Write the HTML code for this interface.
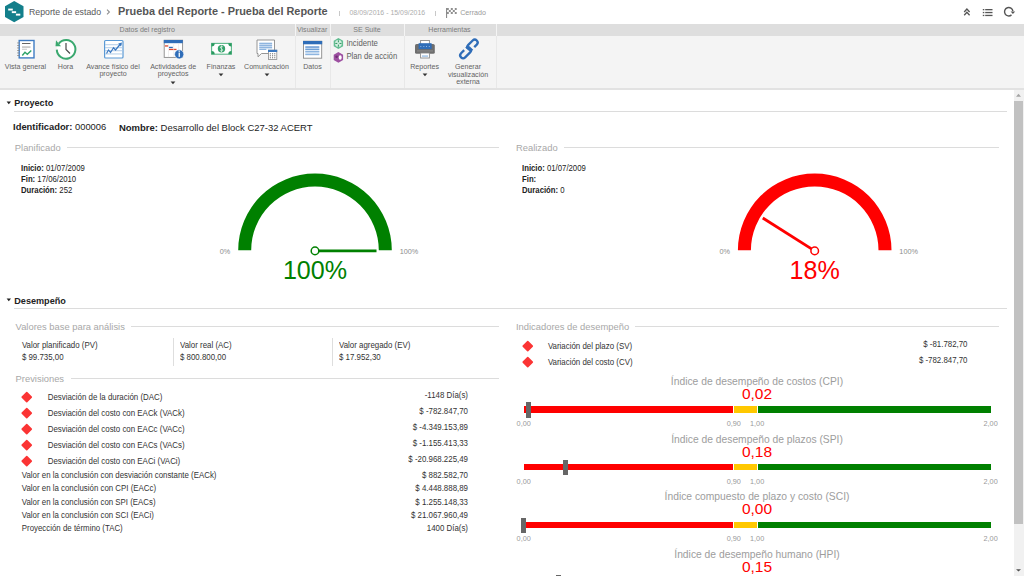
<!DOCTYPE html>
<html><head><meta charset="utf-8"><style>
html,body{margin:0;padding:0;background:#fff;width:1024px;height:576px;overflow:hidden;}
body{position:relative;font-family:"Liberation Sans",sans-serif;}
.t{position:absolute;line-height:1;white-space:nowrap;transform:scaleY(1.08);transform-origin:0 0.8465em;}
.r{position:absolute;}
.a{position:absolute;overflow:visible;}
</style></head><body>
<svg class="a" style="left:0;top:0" width="30" height="24" viewBox="0 0 30 24">
<polygon points="14.2,1 23.5,6.3 23.5,16.9 14.2,22.2 5,16.9 5,6.3" fill="#137F8B"/>
<rect x="8.2" y="8.6" width="4.6" height="1.9" fill="#fff"/>
<rect x="11.8" y="11.2" width="4.3" height="1.9" fill="#fff"/>
<rect x="15.9" y="13.7" width="4.4" height="1.9" fill="#fff"/>
</svg>
<div class="t" style="left:29.00px;top:7.99px;font-size:8.75px;color:#585858;transform:none;">Reporte de estado</div>
<svg class="a" style="left:104px;top:8px" width="8" height="10" viewBox="0 0 8 10"><polyline points="3,1.6 5.4,4 3,6.4" fill="none" stroke="#8f8f8f" stroke-width="1.1"/></svg>
<div class="t" style="left:118.00px;top:6.46px;font-size:10.91px;color:#555;font-weight:700;transform:none;">Prueba del Reporte - Prueba del Reporte</div>
<div class="r" style="left:338.5px;top:10.5px;width:1px;height:5px;background:#c8c8c8;"></div>
<div class="t" style="left:349.50px;top:9.73px;font-size:6.94px;color:#adadad;">08/09/2016 - 15/09/2016</div>
<div class="r" style="left:435px;top:10.5px;width:1px;height:5px;background:#c8c8c8;"></div>
<svg class="a" style="left:445px;top:6px" width="13" height="13" viewBox="0 0 13 13">
<rect x="1" y="2" width="1.1" height="10" fill="#8c8c8c"/>
<path d="M2 2h1.8v2h-1.8zM5.8 2h2v2h-2zM9.8 2h1.9v2h-1.9zM3.8 4h2v2h-2zM7.8 4h2v2h-2zM2 6h1.8v2h-1.8zM5.8 6h2v2h-2zM9.8 6h1.9v2h-1.9z" fill="#8f8f8f"/>
</svg>
<div class="t" style="left:460.20px;top:9.55px;font-size:7.15px;color:#9a9a9a;">Cerrado</div>
<svg class="a" style="left:962px;top:6px" width="56" height="13" viewBox="0 0 56 13">
<polyline points="2.2,6 4.9,3 7.6,6" fill="none" stroke="#555" stroke-width="1.3"/>
<polyline points="2.2,9.3 4.9,6.3 7.6,9.3" fill="none" stroke="#555" stroke-width="1.3"/>
<rect x="20.8" y="3" width="1.5" height="1.3" fill="#555"/><rect x="23.2" y="3" width="7.3" height="1.3" fill="#555"/>
<rect x="20.8" y="5.9" width="1.5" height="1.3" fill="#555"/><rect x="23.2" y="5.9" width="7.3" height="1.3" fill="#555"/>
<rect x="20.8" y="8.8" width="1.5" height="1.3" fill="#555"/><rect x="23.2" y="8.8" width="7.3" height="1.3" fill="#555"/>
<path d="M50.9,5.2 A4.2,4.2 0 1 0 49.5,8.9" fill="none" stroke="#555" stroke-width="1.4"/>
<polygon points="48.6,5.4 53.2,5.4 50.9,8.1" fill="#555"/>
</svg>
<div class="r" style="left:0px;top:24px;width:1024px;height:12px;background:#dedede;"></div>
<div class="r" style="left:0px;top:36px;width:1024px;height:52px;background:#f4f4f4;"></div>
<div class="r" style="left:0px;top:88px;width:1024px;height:2px;background:#e2e2e2;"></div>
<div class="r" style="left:294.5px;top:24px;width:1px;height:12px;background:#f4f4f4;"></div>
<div class="r" style="left:294.5px;top:36px;width:1px;height:52px;background:#e8e8e8;"></div>
<div class="r" style="left:330px;top:24px;width:1px;height:12px;background:#f4f4f4;"></div>
<div class="r" style="left:330px;top:36px;width:1px;height:52px;background:#e8e8e8;"></div>
<div class="r" style="left:403.5px;top:24px;width:1px;height:12px;background:#f4f4f4;"></div>
<div class="r" style="left:403.5px;top:36px;width:1px;height:52px;background:#e8e8e8;"></div>
<div class="r" style="left:495.5px;top:24px;width:1px;height:12px;background:#f4f4f4;"></div>
<div class="r" style="left:495.5px;top:36px;width:1px;height:52px;background:#e8e8e8;"></div>
<div class="t" style="left:-152.80px;width:600px;text-align:center;top:25.92px;font-size:7.06px;color:#7c7c7c;">Datos del registro</div>
<div class="t" style="left:12.20px;width:600px;text-align:center;top:25.92px;font-size:7.06px;color:#7c7c7c;">Visualizar</div>
<div class="t" style="left:67.00px;width:600px;text-align:center;top:25.92px;font-size:7.06px;color:#7c7c7c;">SE Suite</div>
<div class="t" style="left:149.50px;width:600px;text-align:center;top:25.92px;font-size:7.06px;color:#7c7c7c;">Herramientas</div>
<div class="t" style="left:-274.50px;width:600px;text-align:center;top:63.59px;font-size:7.1px;color:#636363;">Vista general</div>
<div class="t" style="left:-234.50px;width:600px;text-align:center;top:63.59px;font-size:7.1px;color:#636363;">Hora</div>
<div class="t" style="left:-187.00px;width:600px;text-align:center;top:63.59px;font-size:7.1px;color:#636363;">Avance físico del</div>
<div class="t" style="left:-187.00px;width:600px;text-align:center;top:71.39px;font-size:7.1px;color:#636363;">proyecto</div>
<div class="t" style="left:-126.80px;width:600px;text-align:center;top:63.59px;font-size:7.1px;color:#636363;">Actividades de</div>
<div class="t" style="left:-126.80px;width:600px;text-align:center;top:71.39px;font-size:7.1px;color:#636363;">proyectos</div>
<svg class="a" style="left:170.3px;top:80.7px" width="6" height="4" viewBox="0 0 6 4"><polygon points="0.6,0.5 5.4,0.5 3,3.2" fill="#333"/></svg>
<div class="t" style="left:-79.00px;width:600px;text-align:center;top:63.59px;font-size:7.1px;color:#636363;">Finanzas</div>
<svg class="a" style="left:218px;top:72.9px" width="6" height="4" viewBox="0 0 6 4"><polygon points="0.6,0.5 5.4,0.5 3,3.2" fill="#333"/></svg>
<div class="t" style="left:-33.50px;width:600px;text-align:center;top:63.59px;font-size:7.1px;color:#636363;">Comunicación</div>
<svg class="a" style="left:263.6px;top:72.9px" width="6" height="4" viewBox="0 0 6 4"><polygon points="0.6,0.5 5.4,0.5 3,3.2" fill="#333"/></svg>
<div class="t" style="left:12.50px;width:600px;text-align:center;top:63.59px;font-size:7.1px;color:#636363;">Datos</div>
<div class="t" style="left:346.40px;top:39.54px;font-size:7.75px;color:#606060;">Incidente</div>
<div class="t" style="left:346.40px;top:53.14px;font-size:7.75px;color:#606060;">Plan de acción</div>
<div class="t" style="left:124.60px;width:600px;text-align:center;top:63.59px;font-size:7.1px;color:#636363;">Reportes</div>
<svg class="a" style="left:421.6px;top:72.9px" width="6" height="4" viewBox="0 0 6 4"><polygon points="0.6,0.5 5.4,0.5 3,3.2" fill="#333"/></svg>
<div class="t" style="left:168.00px;width:600px;text-align:center;top:63.59px;font-size:7.1px;color:#636363;">Generar</div>
<div class="t" style="left:168.00px;width:600px;text-align:center;top:71.59px;font-size:7.1px;color:#636363;">visualización</div>
<div class="t" style="left:168.00px;width:600px;text-align:center;top:79.49px;font-size:7.1px;color:#636363;">externa</div>
<svg class="a" style="left:0;top:36px" width="500" height="26" viewBox="0 36 500 26">
<!-- vista general -->
<rect x="19.2" y="40.5" width="14.8" height="17.4" fill="#fff" stroke="#3f7cc4" stroke-width="1.4"/>
<g fill="#8a8a8a"><rect x="17.2" y="42.5" width="2.2" height="0.9"/><rect x="17.2" y="45" width="2.2" height="0.9"/><rect x="17.2" y="47.5" width="2.2" height="0.9"/><rect x="17.2" y="50" width="2.2" height="0.9"/><rect x="17.2" y="52.5" width="2.2" height="0.9"/><rect x="17.2" y="55" width="2.2" height="0.9"/></g>
<rect x="22" y="43" width="8.5" height="1" fill="#666"/>
<rect x="22" y="46.5" width="8.5" height="1.1" fill="#aaa"/>
<rect x="22" y="48.8" width="5" height="0.8" fill="#bbb"/>
<polyline points="22.3,55.5 25,52.3 27.3,54.3 31.3,50.5" fill="none" stroke="#2ea36a" stroke-width="1.4"/>
<!-- hora -->
<circle cx="66" cy="49.2" r="9.2" fill="#fff"/>
<path d="M56.8,49.6 A9.3,9.3 0 1 0 58.8,43.6" fill="none" stroke="#3aa86f" stroke-width="2"/>
<polygon points="56,40.2 61,46.2 55.5,46.2" fill="#3aa86f"/>
<polyline points="66,43 66,49.5 70,53.5" fill="none" stroke="#4a4a4a" stroke-width="1.2"/>
<!-- avance -->
<rect x="104.6" y="40.5" width="18.4" height="17.5" rx="1" fill="#fff" stroke="#5b9ad5" stroke-width="1.2"/>
<g fill="#a9c7e6"><rect x="105" y="44.3" width="17.6" height="0.9"/><rect x="105" y="47.3" width="17.6" height="0.9"/><rect x="105" y="50.3" width="17.6" height="0.9"/><rect x="105" y="53.5" width="17.6" height="0.9"/></g>
<polyline points="106.5,53.5 108.5,50 110.5,52.5 113.5,47.8 115.5,50 120,44.5" fill="none" stroke="#3a78c0" stroke-width="1.2"/>
<polygon points="118.2,43.5 122,42.6 121,46.4" fill="#3a78c0"/>
<!-- actividades -->
<rect x="164.2" y="40.2" width="18.4" height="17.2" fill="#fff" stroke="#8a8a8a" stroke-width="0.9"/>
<rect x="163.8" y="40" width="19" height="3.2" fill="#2f6db8"/>
<rect x="165" y="45.3" width="3.3" height="1.3" fill="#e0452a"/>
<rect x="169" y="46.8" width="3.8" height="1.3" fill="#2f6db8"/>
<rect x="169" y="48.8" width="7.5" height="1.3" fill="#e0452a"/>
<rect x="168.2" y="43.5" width="0.6" height="13.6" fill="#e4e4e4"/><rect x="173.5" y="43.5" width="0.6" height="13.6" fill="#e8e8e8"/><rect x="178" y="43.5" width="0.6" height="13.6" fill="#e8e8e8"/>
<circle cx="179.2" cy="54.3" r="4.6" fill="#2f6db8" stroke="#fff" stroke-width="0.6"/>
<rect x="178.6" y="52.6" width="1.3" height="4.3" fill="#fff"/><rect x="178.6" y="50.6" width="1.3" height="1.2" fill="#fff"/>
<!-- finanzas -->
<rect x="211.6" y="43.4" width="19.8" height="10.8" fill="#fff" stroke="#5cb88a" stroke-width="1.1"/>
<path d="M211.5 43.3h3.2a3.2 3.2 0 0 1 -3.2 3.2z M231.5 43.3v3.2a3.2 3.2 0 0 1 -3.2 -3.2z M211.5 54.3v-3.2a3.2 3.2 0 0 1 3.2 3.2z M231.5 54.3h-3.2a3.2 3.2 0 0 1 3.2 -3.2z" fill="#2a9a60"/>
<circle cx="221.5" cy="48.8" r="3.7" fill="#34a36b"/>
<path d="M222.9,46.9 Q221.5,46 220.4,46.9 Q219.9,48.2 221.5,48.7 Q223.2,49.3 222.6,50.6 Q221.5,51.5 220.1,50.6 M221.5,45.4 V52.2" fill="none" stroke="#e6f5ec" stroke-width="0.7"/>
<!-- comunicacion -->
<path d="M257,40 h17.5 v13.5 h-13 l-3.5,3.3 v-3.3 h-1 z" fill="#fff" stroke="#8a8a8a" stroke-width="0.9"/>
<rect x="259.3" y="42.6" width="12.8" height="6.6" fill="#d3e3f4"/><g fill="#8fb5df"><rect x="259.3" y="42.8" width="12.8" height="1.2"/><rect x="259.3" y="44.8" width="12.8" height="1.2"/><rect x="259.3" y="46.8" width="12.8" height="1.2"/><rect x="259.3" y="48.8" width="7" height="1.2"/></g>
<rect x="268.4" y="50.2" width="8.4" height="9.2" fill="#fff" stroke="#8a8a8a" stroke-width="0.8"/>
<rect x="268" y="49.8" width="9.2" height="2.2" fill="#3a78c0"/>
<g fill="#777"><rect x="269.8" y="53.2" width="1.1" height="1.1"/><rect x="272" y="53.2" width="1.1" height="1.1"/><rect x="274.2" y="53.2" width="1.1" height="1.1"/><rect x="269.8" y="55.2" width="1.1" height="1.1"/><rect x="272" y="55.2" width="1.1" height="1.1"/><rect x="274.2" y="55.2" width="1.1" height="1.1"/><rect x="269.8" y="57.2" width="1.1" height="1.1"/><rect x="272" y="57.2" width="1.1" height="1.1"/><rect x="274.2" y="57.2" width="1.1" height="1.1"/></g>
<!-- datos -->
<rect x="303.5" y="41.2" width="18.2" height="17" fill="#fff" stroke="#8a8a8a" stroke-width="0.9"/>
<rect x="303" y="41" width="19.2" height="3.3" fill="#2f6db8"/>
<rect x="305.3" y="46.3" width="14" height="9" fill="#dce8f5"/>
<g><rect x="305.3" y="46.4" width="14" height="1.3" fill="#5a8fd0"/><rect x="305.3" y="48.7" width="14" height="1.3" fill="#6d9fd6"/><rect x="305.3" y="51" width="14" height="1.3" fill="#8db5e0"/><rect x="305.3" y="53.8" width="14" height="1.3" fill="#8db5e0"/></g>
<!-- incidente -->
<polygon points="338.4,38 343.1,40.7 343.1,46.2 338.4,48.9 333.7,46.2 333.7,40.7" fill="#62bd91"/>
<circle cx="338.4" cy="43.45" r="3.4" fill="#d2ede0"/>
<path d="M338.4 40.3v2M338.4 44.6v2M335.3 43.45h2M339.5 43.45h2" stroke="#1f8f52" stroke-width="0.9"/>
<!-- plan -->
<polygon points="338.4,52 343.1,54.7 343.1,60.1 338.4,62.8 333.7,60.1 333.7,54.7" fill="#9d50a1"/>
<ellipse cx="340.2" cy="57.5" rx="1.5" ry="2.2" fill="#fff"/>
<circle cx="336.6" cy="56.8" r="1.3" fill="#6d2f72"/>
<!-- reportes -->
<rect x="420.6" y="40.5" width="8.8" height="4" fill="#fff" stroke="#8a8a8a" stroke-width="0.9"/>
<rect x="415" y="44" width="19.8" height="9.8" rx="1.6" fill="#6e6e6e"/>
<rect x="418.6" y="43.2" width="13" height="5.9" fill="#2f6db8"/>
<g fill="#8fb5df"><rect x="420.3" y="46" width="1" height="1"/><rect x="423.3" y="46" width="1" height="1"/><rect x="426" y="46" width="1" height="1"/><rect x="428.8" y="46" width="1" height="1"/></g>
<rect x="417" y="50.6" width="16" height="0.7" fill="#9a9a9a"/>
<rect x="420.6" y="53" width="8.8" height="5" fill="#fff" stroke="#8a8a8a" stroke-width="0.9"/>
<rect x="422" y="55.3" width="6" height="1.6" fill="#a9c8e8"/>
<!-- link -->
<g transform="translate(469.2,49.2) rotate(-45)" fill="none" stroke="#2f6db8" stroke-width="2.3">
<path d="M5.0,2.10 L8.6,2.10 A2.9,2.9 0 0 0 8.6,-3.70 L2.4,-3.70 A2.9,2.9 0 0 0 2.4,2.10"/>
<path d="M-4.2,-2.90 L-8.6,-2.90 A2.9,2.9 0 0 0 -8.6,2.90 L-1.6,2.90 A2.9,2.9 0 0 0 -1.6,-2.90"/>
</g>
</svg>
<svg class="a" style="left:6px;top:100px" width="6" height="5" viewBox="0 0 6 5"><polygon points="0.6,1.5 5,1.5 2.8,4.2" fill="#222"/></svg>
<div class="t" style="left:14.30px;top:99.40px;font-size:9.1px;color:#222;font-weight:700;transform:none;">Proyecto</div>
<div class="r" style="left:14px;top:111px;width:993px;height:1px;background:#dcdcdc;"></div>
<div class="t" style="left:13.10px;top:122.67px;font-size:9.37px;color:#222;transform:none;"><b>Identificador:</b> 000006</div>
<div class="t" style="left:119.00px;top:122.58px;font-size:9.47px;color:#222;transform:none;"><b>Nombre:</b> Desarrollo del Block C27-32 ACERT</div>
<div class="t" style="left:14.80px;top:143.44px;font-size:9.4px;color:#a8a8a8;transform:none;">Planificado</div>
<div class="r" style="left:66.5px;top:147px;width:432.5px;height:1px;background:#dcdcdc;"></div>
<div class="t" style="left:516.00px;top:143.44px;font-size:9.4px;color:#a8a8a8;transform:none;">Realizado</div>
<div class="r" style="left:563.5px;top:147px;width:435px;height:1px;background:#dcdcdc;"></div>
<div class="t" style="left:21.00px;top:164.94px;font-size:7.75px;color:#222;"><b>Inicio:</b> 01/07/2009</div>
<div class="t" style="left:21.00px;top:175.74px;font-size:7.75px;color:#222;"><b>Fin:</b> 17/06/2010</div>
<div class="t" style="left:21.00px;top:186.54px;font-size:7.75px;color:#222;"><b>Duración:</b> 252</div>
<div class="t" style="left:522.00px;top:164.94px;font-size:7.75px;color:#222;"><b>Inicio:</b> 01/07/2009</div>
<div class="t" style="left:522.00px;top:175.74px;font-size:7.75px;color:#222;"><b>Fin:</b> </div>
<div class="t" style="left:522.00px;top:186.54px;font-size:7.75px;color:#222;"><b>Duración:</b> 0</div>
<svg class="a" style="left:0;top:0" width="1024" height="576">
<path d="M238.2,250.3 A76.8,76.8 0 0 1 391.8,250.3 L378.8,250.3 A63.8,63.8 0 0 0 251.2,250.3 Z" fill="#008000"/>
<line x1="315" y1="250.9" x2="376.50" y2="250.90" stroke="#008000" stroke-width="2.8"/>
<circle cx="315" cy="250.9" r="3.8" fill="#fff" stroke="#008000" stroke-width="1.5"/>
</svg>
<div class="t" style="left:-75.00px;width:600px;text-align:center;top:248.32px;font-size:7.3px;color:#8c8c8c;">0%</div>
<div class="t" style="left:109.00px;width:600px;text-align:center;top:248.32px;font-size:7.3px;color:#8c8c8c;">100%</div>
<div class="t" style="left:15.00px;width:600px;text-align:center;top:258.05px;font-size:25.1px;color:#008000;transform:none;">100%</div>
<svg class="a" style="left:0;top:0" width="1024" height="576">
<path d="M737.9000000000001,250.3 A76.8,76.8 0 0 1 891.5,250.3 L878.5,250.3 A63.8,63.8 0 0 0 750.9000000000001,250.3 Z" fill="#ff0000"/>
<line x1="814.7" y1="250.9" x2="762.77" y2="217.95" stroke="#ff0000" stroke-width="2.8"/>
<circle cx="814.7" cy="250.9" r="3.8" fill="#fff" stroke="#ff0000" stroke-width="1.5"/>
</svg>
<div class="t" style="left:424.70px;width:600px;text-align:center;top:248.32px;font-size:7.3px;color:#8c8c8c;">0%</div>
<div class="t" style="left:608.70px;width:600px;text-align:center;top:248.32px;font-size:7.3px;color:#8c8c8c;">100%</div>
<div class="t" style="left:514.70px;width:600px;text-align:center;top:258.05px;font-size:25.1px;color:#ff0000;transform:none;">18%</div>
<svg class="a" style="left:6px;top:297px" width="6" height="5" viewBox="0 0 6 5"><polygon points="0.6,1.5 5,1.5 2.8,4.2" fill="#222"/></svg>
<div class="t" style="left:14.30px;top:296.70px;font-size:9.1px;color:#222;font-weight:700;transform:none;">Desempeño</div>
<div class="r" style="left:14px;top:308px;width:993px;height:1px;background:#dcdcdc;"></div>
<div class="t" style="left:15.60px;top:322.44px;font-size:9.4px;color:#a8a8a8;transform:none;">Valores base para análisis</div>
<div class="r" style="left:131px;top:326px;width:368px;height:1px;background:#dcdcdc;"></div>
<div class="t" style="left:21.90px;top:341.81px;font-size:7.9px;color:#333;">Valor planificado (PV)</div>
<div class="t" style="left:21.90px;top:353.61px;font-size:7.9px;color:#333;">$ 99.735,00</div>
<div class="t" style="left:180.00px;top:341.81px;font-size:7.9px;color:#333;">Valor real (AC)</div>
<div class="t" style="left:180.00px;top:353.61px;font-size:7.9px;color:#333;">$ 800.800,00</div>
<div class="t" style="left:339.00px;top:341.81px;font-size:7.9px;color:#333;">Valor agregado (EV)</div>
<div class="t" style="left:339.00px;top:353.61px;font-size:7.9px;color:#333;">$ 17.952,30</div>
<div class="r" style="left:173px;top:338px;width:1px;height:27.5px;background:#dedede;"></div>
<div class="r" style="left:332px;top:338px;width:1px;height:27.5px;background:#dedede;"></div>
<div class="t" style="left:15.60px;top:374.14px;font-size:9.4px;color:#a8a8a8;transform:none;">Previsiones</div>
<div class="r" style="left:71.3px;top:378px;width:427.7px;height:1px;background:#dcdcdc;"></div>
<div class="r" style="left:23.10px;top:393.05px;width:7.5px;height:7.5px;background:#fb3434;border-radius:0.8px;transform:rotate(45deg)"></div>
<div class="t" style="left:47.70px;top:394.00px;font-size:7.92px;color:#333;">Desviación de la duración (DAC)</div>
<div class="t" style="right:556.00px;top:392.21px;font-size:7.9px;color:#333;">-1148 Día(s)</div>
<div class="r" style="left:23.10px;top:409.00px;width:7.5px;height:7.5px;background:#fb3434;border-radius:0.8px;transform:rotate(45deg)"></div>
<div class="t" style="left:47.70px;top:409.95px;font-size:7.92px;color:#333;">Desviación del costo con EACk (VACk)</div>
<div class="t" style="right:556.00px;top:408.16px;font-size:7.9px;color:#333;">$ -782.847,70</div>
<div class="r" style="left:23.10px;top:424.95px;width:7.5px;height:7.5px;background:#fb3434;border-radius:0.8px;transform:rotate(45deg)"></div>
<div class="t" style="left:47.70px;top:425.90px;font-size:7.92px;color:#333;">Desviación del costo con EACc (VACc)</div>
<div class="t" style="right:556.00px;top:424.11px;font-size:7.9px;color:#333;">$ -4.349.153,89</div>
<div class="r" style="left:23.10px;top:440.90px;width:7.5px;height:7.5px;background:#fb3434;border-radius:0.8px;transform:rotate(45deg)"></div>
<div class="t" style="left:47.70px;top:441.85px;font-size:7.92px;color:#333;">Desviación del costo con EACs (VACs)</div>
<div class="t" style="right:556.00px;top:440.06px;font-size:7.9px;color:#333;">$ -1.155.413,33</div>
<div class="r" style="left:23.10px;top:456.85px;width:7.5px;height:7.5px;background:#fb3434;border-radius:0.8px;transform:rotate(45deg)"></div>
<div class="t" style="left:47.70px;top:457.80px;font-size:7.92px;color:#333;">Desviación del costo con EACi (VACi)</div>
<div class="t" style="right:556.00px;top:456.01px;font-size:7.9px;color:#333;">$ -20.968.225,49</div>
<div class="t" style="left:21.80px;top:471.63px;font-size:7.88px;color:#333;">Valor en la conclusión con desviación constante (EACk)</div>
<div class="t" style="right:556.00px;top:471.61px;font-size:7.9px;color:#333;">$ 882.582,70</div>
<div class="t" style="left:21.80px;top:485.08px;font-size:7.88px;color:#333;">Valor en la conclusión con CPI (EACc)</div>
<div class="t" style="right:556.00px;top:485.06px;font-size:7.9px;color:#333;">$ 4.448.888,89</div>
<div class="t" style="left:21.80px;top:498.53px;font-size:7.88px;color:#333;">Valor en la conclusión con SPI (EACs)</div>
<div class="t" style="right:556.00px;top:498.51px;font-size:7.9px;color:#333;">$ 1.255.148,33</div>
<div class="t" style="left:21.80px;top:511.98px;font-size:7.88px;color:#333;">Valor en la conclusión con SCI (EACi)</div>
<div class="t" style="right:556.00px;top:511.96px;font-size:7.9px;color:#333;">$ 21.067.960,49</div>
<div class="t" style="left:21.80px;top:525.43px;font-size:7.88px;color:#333;">Proyección de término (TAC)</div>
<div class="t" style="right:556.00px;top:525.41px;font-size:7.9px;color:#333;">1400 Día(s)</div>
<div class="t" style="left:516.00px;top:322.44px;font-size:9.4px;color:#a8a8a8;transform:none;">Indicadores de desempeño</div>
<div class="r" style="left:634.8px;top:325.5px;width:364px;height:1px;background:#dcdcdc;"></div>
<div class="r" style="left:523.70px;top:341.75px;width:7.5px;height:7.5px;background:#fb3434;border-radius:0.8px;transform:rotate(45deg)"></div>
<div class="t" style="left:547.90px;top:342.90px;font-size:7.92px;color:#333;">Variación del plazo (SV)</div>
<div class="t" style="right:56.50px;top:340.73px;font-size:7.88px;color:#333;">$ -81.782,70</div>
<div class="r" style="left:523.70px;top:357.75px;width:7.5px;height:7.5px;background:#fb3434;border-radius:0.8px;transform:rotate(45deg)"></div>
<div class="t" style="left:547.90px;top:358.90px;font-size:7.92px;color:#333;">Variación del costo (CV)</div>
<div class="t" style="right:56.50px;top:356.73px;font-size:7.88px;color:#333;">$ -782.847,70</div>
<div class="t" style="left:457.00px;width:600px;text-align:center;top:376.98px;font-size:10.3px;color:#9d9d9d;transform:none;">Índice de desempeño de costos (CPI)</div>
<div class="t" style="left:457.00px;width:600px;text-align:center;top:385.88px;font-size:15.5px;color:#ff0000;transform:none;">0,02</div>
<div class="r" style="left:523.7px;top:406.4px;width:209.50500000000002px;height:6.2px;background:#ff0000;"></div>
<div class="r" style="left:734.4050000000001px;top:406.4px;width:22.145000000000028px;height:6.2px;background:#ffc800;"></div>
<div class="r" style="left:757.7500000000001px;top:406.4px;width:232.84999999999994px;height:6.2px;background:#008000;"></div>
<div class="r" style="left:525.769px;top:402.2px;width:5.2px;height:15.6px;background:#666;"></div>
<div class="t" style="left:223.70px;width:600px;text-align:center;top:420.02px;font-size:7.3px;color:#999;">0,00</div>
<div class="t" style="left:433.81px;width:600px;text-align:center;top:420.02px;font-size:7.3px;color:#999;">0,90</div>
<div class="t" style="left:457.15px;width:600px;text-align:center;top:420.02px;font-size:7.3px;color:#999;">1,00</div>
<div class="t" style="left:690.60px;width:600px;text-align:center;top:420.02px;font-size:7.3px;color:#999;">2,00</div>
<div class="t" style="left:457.00px;width:600px;text-align:center;top:434.68px;font-size:10.3px;color:#9d9d9d;transform:none;">Índice de desempeño de plazos (SPI)</div>
<div class="t" style="left:457.00px;width:600px;text-align:center;top:443.58px;font-size:15.5px;color:#ff0000;transform:none;">0,18</div>
<div class="r" style="left:523.7px;top:464.09999999999997px;width:209.50500000000002px;height:6.2px;background:#ff0000;"></div>
<div class="r" style="left:734.4050000000001px;top:464.09999999999997px;width:22.145000000000028px;height:6.2px;background:#ffc800;"></div>
<div class="r" style="left:757.7500000000001px;top:464.09999999999997px;width:232.84999999999994px;height:6.2px;background:#008000;"></div>
<div class="r" style="left:563.121px;top:459.9px;width:5.2px;height:15.6px;background:#666;"></div>
<div class="t" style="left:223.70px;width:600px;text-align:center;top:477.72px;font-size:7.3px;color:#999;">0,00</div>
<div class="t" style="left:433.81px;width:600px;text-align:center;top:477.72px;font-size:7.3px;color:#999;">0,90</div>
<div class="t" style="left:457.15px;width:600px;text-align:center;top:477.72px;font-size:7.3px;color:#999;">1,00</div>
<div class="t" style="left:690.60px;width:600px;text-align:center;top:477.72px;font-size:7.3px;color:#999;">2,00</div>
<div class="t" style="left:457.00px;width:600px;text-align:center;top:492.38px;font-size:10.3px;color:#9d9d9d;transform:none;">Índice compuesto de plazo y costo (SCI)</div>
<div class="t" style="left:457.00px;width:600px;text-align:center;top:501.28px;font-size:15.5px;color:#ff0000;transform:none;">0,00</div>
<div class="r" style="left:523.7px;top:521.8px;width:209.50500000000002px;height:6.2px;background:#ff0000;"></div>
<div class="r" style="left:734.4050000000001px;top:521.8px;width:22.145000000000028px;height:6.2px;background:#ffc800;"></div>
<div class="r" style="left:757.7500000000001px;top:521.8px;width:232.84999999999994px;height:6.2px;background:#008000;"></div>
<div class="r" style="left:521.1px;top:517.5999999999999px;width:5.2px;height:15.6px;background:#666;"></div>
<div class="t" style="left:223.70px;width:600px;text-align:center;top:535.42px;font-size:7.3px;color:#999;">0,00</div>
<div class="t" style="left:433.81px;width:600px;text-align:center;top:535.42px;font-size:7.3px;color:#999;">0,90</div>
<div class="t" style="left:457.15px;width:600px;text-align:center;top:535.42px;font-size:7.3px;color:#999;">1,00</div>
<div class="t" style="left:690.60px;width:600px;text-align:center;top:535.42px;font-size:7.3px;color:#999;">2,00</div>
<div class="t" style="left:457.00px;width:600px;text-align:center;top:550.08px;font-size:10.3px;color:#9d9d9d;transform:none;">Índice de desempeño humano (HPI)</div>
<div class="t" style="left:457.00px;width:600px;text-align:center;top:558.98px;font-size:15.5px;color:#ff0000;transform:none;">0,15</div>
<div class="r" style="left:523.7px;top:579.5px;width:209.50500000000002px;height:6.2px;background:#ff0000;"></div>
<div class="r" style="left:734.4050000000001px;top:579.5px;width:22.145000000000028px;height:6.2px;background:#ffc800;"></div>
<div class="r" style="left:757.7500000000001px;top:579.5px;width:232.84999999999994px;height:6.2px;background:#008000;"></div>
<div class="r" style="left:556.1175000000001px;top:575.3px;width:5.2px;height:15.6px;background:#666;"></div>
<div class="t" style="left:223.70px;width:600px;text-align:center;top:593.12px;font-size:7.3px;color:#999;">0,00</div>
<div class="t" style="left:433.81px;width:600px;text-align:center;top:593.12px;font-size:7.3px;color:#999;">0,90</div>
<div class="t" style="left:457.15px;width:600px;text-align:center;top:593.12px;font-size:7.3px;color:#999;">1,00</div>
<div class="t" style="left:690.60px;width:600px;text-align:center;top:593.12px;font-size:7.3px;color:#999;">2,00</div>
<div class="r" style="left:1013.5px;top:90px;width:10.5px;height:486px;background:#f1f1f1;"></div>
<div class="r" style="left:1014.3px;top:100.5px;width:8.5px;height:423.3px;background:#c1c1c1;"></div>
<svg class="a" style="left:1013px;top:90px" width="11" height="486" viewBox="0 0 11 486"><polygon points="3,6.7 8,6.7 5.5,3.8" fill="#a3a3a3"/><polygon points="3,479.2 8,479.2 5.5,481.6" fill="#505050"/></svg>
</body></html>
